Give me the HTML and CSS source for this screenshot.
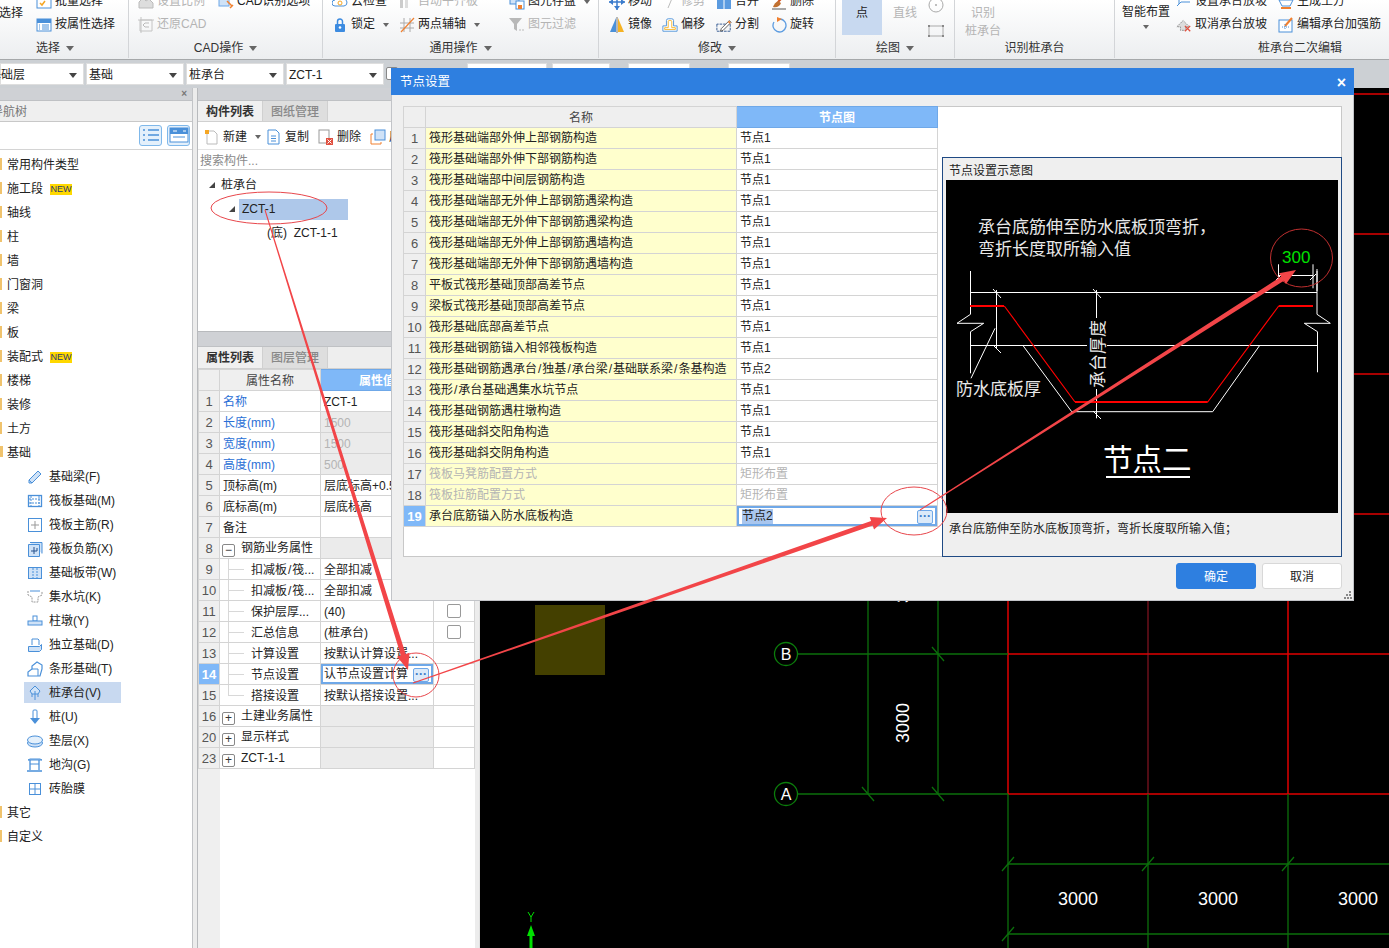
FILE: index.html
```html
<!DOCTYPE html>
<html lang="zh-CN">
<head>
<meta charset="utf-8">
<title>节点设置</title>
<link rel="stylesheet" href="styles.css">
</head>
<body>
<svg class="sprite" xmlns="http://www.w3.org/2000/svg">
  <symbol id="i-batch" viewBox="0 0 16 16"><rect x="1" y="2" width="14" height="12" fill="#fff" stroke="#4a90d9"/><path d="M4 9l2 2 3-4" fill="none" stroke="#f5a623" stroke-width="1.5"/></symbol>
  <symbol id="i-attr" viewBox="0 0 16 16"><rect x="1" y="2" width="14" height="12" fill="#fff" stroke="#4a90d9"/><rect x="1" y="2" width="14" height="4" fill="#4a90d9"/><path d="M3 8h1M3 10h1M3 12h1M6 8h7M6 10h7M6 12h7" stroke="#4a90d9"/></symbol>
  <symbol id="i-scale" viewBox="0 0 16 16"><path d="M1 14V8l4-4 3 3 3-2 4 4v5z" fill="#ddd" stroke="#bbb"/></symbol>
  <symbol id="i-cad" viewBox="0 0 16 16"><rect x="1" y="2" width="10" height="10" fill="#cfe2f7" stroke="#6fa8e8"/><path d="M9 7l5 5M12 14l3-3" stroke="#f08030" stroke-width="1.5"/></symbol>
  <symbol id="i-restore" viewBox="0 0 16 16"><path d="M2 3v11h12V3H2M0 3h16M3 0v16" fill="none" stroke="#c4c4c4"/><path d="M11 6H7L5 8l2 2h4" fill="none" stroke="#bbb"/></symbol>
  <symbol id="i-cloud" viewBox="0 0 16 16"><path d="M3 12a3 3 0 010-6 4 4 0 018-1 3.500 3.500 0 011 7z" fill="#fff" stroke="#4a90d9"/><circle cx="8" cy="9" r="2" fill="none" stroke="#f5a623"/></symbol>
  <symbol id="i-lock" viewBox="0 0 16 16"><path d="M5.500 7V4.500a2.500 2.500 0 015 0V7" fill="none" stroke="#3c8be0" stroke-width="1.500"/><rect x="3" y="7" width="10" height="8" rx="1" fill="#3c8be0"/><circle cx="8" cy="10.500" r="1.300" fill="#fff"/></symbol>
  <symbol id="i-align" viewBox="0 0 16 16"><rect x="1" y="2" width="3" height="12" fill="#ccc"/><rect x="6" y="5" width="3" height="9" fill="#ddd"/></symbol>
  <symbol id="i-axis" viewBox="0 0 16 16"><path d="M1 6h14M1 11h14M5 1v14M11 1v14" stroke="#aaa"/><path d="M2 15L15 1" stroke="#f08030" stroke-width="1.200"/></symbol>
  <symbol id="i-save" viewBox="0 0 16 16"><rect x="1" y="1" width="9" height="9" fill="#cfe2f7" stroke="#4a90d9"/><rect x="7" y="7" width="8" height="8" fill="#fff" stroke="#4a90d9"/><rect x="9" y="11" width="4" height="4" fill="#f08030"/></symbol>
  <symbol id="i-filter" viewBox="0 0 16 16"><path d="M0 1h13L8 7v7L5 12V7z" fill="#b8b8b8"/><path d="M10 13h2M13 13h2" stroke="#bbb"/></symbol>
  <symbol id="i-move" viewBox="0 0 16 16"><path d="M8 0v16M0 8h16" stroke="#3c7ccc" stroke-width="1.500"/><path d="M8 16l-3-4h6zM0 8l4-3v6zM16 8l-4-3v6z" fill="#3c7ccc"/></symbol>
  <symbol id="i-trim" viewBox="0 0 16 16"><path d="M6 14l5-12" stroke="#bbb"/></symbol>
  <symbol id="i-merge" viewBox="0 0 16 16"><rect x="1" y="4" width="14" height="11" fill="#5b9be0"/><path d="M8 4v11" stroke="#fff"/></symbol>
  <symbol id="i-del" viewBox="0 0 16 16"><path d="M14 1L7 8" stroke="#d05020" stroke-width="2"/><path d="M2 13c1-3 3-5 5-6l3 2c-1 3-4 5-8 4z" fill="#c07030"/><path d="M1 15h14" stroke="#555"/></symbol>
  <symbol id="i-mirror" viewBox="0 0 16 16"><path d="M7 1v14H1z" fill="#4a90d9"/><path d="M9 1v14h6z" fill="#f5b223"/><path d="M8 0v16" stroke="#777"/></symbol>
  <symbol id="i-offset" viewBox="0 0 18 16"><path d="M1 15V9h4V3a2 2 0 012-2h4a2 2 0 012 2v6h4v6z" fill="#fff" stroke="#4a90d9"/><path d="M3 13V11h4V4a1 1 0 011-1h2a1 1 0 011 1v7h4v2z" fill="none" stroke="#f5b223"/></symbol>
  <symbol id="i-split" viewBox="0 0 18 16"><path d="M1 7v8h15V7z" fill="none" stroke="#27508c" stroke-dasharray="3 1"/><path d="M6 12L15 3l2 2-9 9-3 1z" fill="#fff" stroke="#555"/><path d="M14 4l2 2" stroke="#f08030" stroke-width="2"/></symbol>
  <symbol id="i-rotate" viewBox="0 0 16 16"><path d="M9 2a6.500 6.500 0 11-6 3" fill="none" stroke="#5b9be0" stroke-width="1.300"/><path d="M6 0l5 2-5 3z" fill="#f08030"/></symbol>
  <symbol id="i-circle" viewBox="0 0 16 16"><circle cx="8" cy="8" r="7" fill="none" stroke="#aaa"/><circle cx="8" cy="8" r="1" fill="#aaa"/></symbol>
  <symbol id="i-rect" viewBox="0 0 16 12"><rect x="1" y="1" width="14" height="10" fill="none" stroke="#aaa"/><path d="M0 0h2v2H0zM14 0h2v2h-2zM0 10h2v2H0zM14 10h2v2h-2z" fill="#888"/></symbol>
  <symbol id="i-slope" viewBox="0 0 16 16"><path d="M1 12l4-4h9" fill="none" stroke="#4a90d9"/><path d="M3 2v8" stroke="#4a90d9"/></symbol>
  <symbol id="i-cancel" viewBox="0 0 18 16"><path d="M1 10l7-7 7 7H11v4H5v-4z" fill="#ddd" stroke="#888" stroke-dasharray="2 1"/><path d="M10 9l6 6M16 9l-6 6" stroke="#e05040" stroke-width="1.500"/></symbol>
  <symbol id="i-earth" viewBox="0 0 16 16"><path d="M1 6h14l-3 6H4z" fill="#fff" stroke="#4a90d9"/><path d="M3 14h10" stroke="#f08030" stroke-width="2"/></symbol>
  <symbol id="i-strong" viewBox="0 0 16 16"><rect x="1" y="3" width="13" height="12" fill="#fff" stroke="#4a90d9"/><path d="M7 9l7-8" stroke="#f08030" stroke-width="2"/><path d="M4 10h7M7 7v6" stroke="#4a90d9" stroke-dasharray="1 1"/></symbol>
  <symbol id="i-list" viewBox="0 0 20 16"><path d="M2 3h2M2 8h2M2 13h2M7 3h11M7 8h11M7 13h11" stroke="#4a90d9" stroke-width="1.500"/></symbol>
  <symbol id="i-win" viewBox="0 0 20 16"><rect x="1" y="1" width="18" height="14" fill="#fff" stroke="#4a90d9"/><rect x="1" y="1" width="18" height="6" fill="#4a90d9"/><path d="M4 4h4M14 4h3" stroke="#fff"/><path d="M4 10h12" stroke="#4a90d9"/></symbol>
  <symbol id="i-new" viewBox="0 0 16 16"><path d="M3 2h7l3 3v10H3z" fill="#fff" stroke="#bbb"/><path d="M1 1h4v4H1z" fill="#f5a623"/></symbol>
  <symbol id="i-copy" viewBox="0 0 16 16"><path d="M2 1h8l3 3v11H2z" fill="#fff" stroke="#4a90d9"/><path d="M5 7h5M5 9.500h5M5 12h5" stroke="#4a90d9"/></symbol>
  <symbol id="i-remove" viewBox="0 0 16 16"><rect x="1" y="1" width="10" height="13" fill="#fff" stroke="#999"/><rect x="8" y="9" width="7" height="7" fill="#e05040"/><path d="M9.500 10.500l4 4M13.500 10.500l-4 4" stroke="#fff"/></symbol>
  <symbol id="i-layer" viewBox="0 0 16 16"><rect x="5" y="1" width="10" height="10" fill="#cfe2f7" stroke="#4a90d9"/><path d="M3 5H1v10h10v-2" fill="none" stroke="#f08030"/></symbol>
  <symbol id="n-beam" viewBox="0 0 16 16"><path d="M2 11L11 2l3 3-9 9H2z" fill="#cfe2f7" stroke="#4a90d9"/><path d="M2 11l3 3" stroke="#4a90d9"/></symbol>
  <symbol id="n-raft" viewBox="0 0 16 16"><rect x="1.500" y="2.500" width="13" height="11" fill="#fff" stroke="#4a90d9" stroke-width="1.300"/><path d="M4 3v10M12 3v10M2 6h12M2 10h12" stroke="#4a90d9" stroke-dasharray="2 1"/></symbol>
  <symbol id="n-main" viewBox="0 0 16 16"><rect x="1.500" y="1.500" width="13" height="13" fill="#fff" stroke="#4a90d9"/><path d="M8 4v8M4 8h8" stroke="#999"/></symbol>
  <symbol id="n-neg" viewBox="0 0 16 16"><path d="M1.500 3.500h11v12h-11zM3 1.500h12v11" fill="#cfe2f7" stroke="#4a90d9"/><path d="M7 6v7M4 10h6V7" fill="none" stroke="#27508c"/></symbol>
  <symbol id="n-strip" viewBox="0 0 16 16"><rect x="1.500" y="2.500" width="13" height="11" fill="#cfe2f7" stroke="#4a90d9"/><path d="M6 3v10M10 3v10" stroke="#4a90d9" stroke-dasharray="2 1"/></symbol>
  <symbol id="n-pit" viewBox="0 0 16 16"><path d="M1 2v4l4 2v5h6V8l4-2V2" fill="none" stroke="#999" stroke-dasharray="2 1"/><path d="M3 2h10" stroke="#4a90d9"/></symbol>
  <symbol id="n-pier" viewBox="0 0 16 16"><rect x="6" y="3" width="4" height="5" fill="#fff" stroke="#4a90d9"/><rect x="1" y="8" width="14" height="4" fill="#cfe2f7" stroke="#4a90d9"/></symbol>
  <symbol id="n-foot" viewBox="0 0 16 16"><path d="M5 8V2h6l1 1v5" fill="#fff" stroke="#4a90d9"/><path d="M1.500 9.500h11l2-2v5l-2 2h-11z" fill="#cfe2f7" stroke="#4a90d9"/></symbol>
  <symbol id="n-stripf" viewBox="0 0 16 16"><path d="M1 15v-4l4-3V5l5-4 5 3v4l-2 7z" fill="#fff" stroke="#4a90d9" stroke-width="1.200"/><path d="M5 8h6v7" fill="none" stroke="#4a90d9"/></symbol>
  <symbol id="n-cap" viewBox="0 0 16 16"><path d="M8 1l5 5-2 3H5L3 6z" fill="#cfe2f7" stroke="#4a90d9"/><path d="M8 6v9M5 9v3M11 9v3" stroke="#4a90d9"/></symbol>
  <symbol id="n-pile" viewBox="0 0 16 16"><rect x="6" y="1" width="4" height="9" rx="1" fill="#fff" stroke="#4a90d9"/><path d="M3 9h10l-5 6z" fill="#4a90d9"/></symbol>
  <symbol id="n-disc" viewBox="0 0 16 16"><ellipse cx="8" cy="10" rx="7.500" ry="4" fill="#cfe2f7" stroke="#4a90d9"/><ellipse cx="8" cy="7" rx="7.500" ry="4" fill="#e4f0fb" stroke="#4a90d9"/></symbol>
  <symbol id="n-ditch" viewBox="0 0 16 16"><path d="M1 3h14l-2-1H3z" fill="#cfe2f7" stroke="#4a90d9"/><path d="M3 3v10M12 3v10M0 14h15" stroke="#4a90d9" stroke-width="1.300" fill="none"/><path d="M3 7h9" stroke="#4a90d9"/></symbol>
  <symbol id="n-brick" viewBox="0 0 16 16"><rect x="2.500" y="2.500" width="11" height="11" fill="#fff" stroke="#4a90d9"/><path d="M8 3v10M3 8h10" stroke="#4a90d9"/></symbol>
</svg>

<div class="app">
  <header class="ribbon">
    <section class="rgroup g1">
      <div class="rbody">
        <div class="rbig">选择</div>
        <div class="col">
          <div class="ritem"><svg class="ic"><use href="#i-batch"/></svg><span>批量选择</span></div>
          <div class="ritem"><svg class="ic"><use href="#i-attr"/></svg><span>按属性选择</span></div>
        </div>
      </div>
      <div class="rlabel">选择<i class="caret"></i></div>
    </section>
    <section class="rgroup g2">
      <div class="rbody">
        <div class="col w80">
          <div class="ritem off"><svg class="ic"><use href="#i-scale"/></svg><span>设置比例</span></div>
          <div class="ritem off"><svg class="ic"><use href="#i-restore"/></svg><span>还原CAD</span></div>
        </div>
        <div class="col">
          <div class="ritem"><svg class="ic"><use href="#i-cad"/></svg><span>CAD识别选项</span></div>
        </div>
      </div>
      <div class="rlabel">CAD操作<i class="caret"></i></div>
    </section>
    <section class="rgroup g3">
      <div class="rbody">
        <div class="col w67">
          <div class="ritem"><svg class="ic"><use href="#i-cloud"/></svg><span>云检查</span></div>
          <div class="ritem"><svg class="ic"><use href="#i-lock"/></svg><span>锁定</span><i class="caret sm"></i></div>
        </div>
        <div class="col w110">
          <div class="ritem off"><svg class="ic"><use href="#i-align"/></svg><span>自动平齐板</span></div>
          <div class="ritem"><svg class="ic"><use href="#i-axis"/></svg><span>两点辅轴</span><i class="caret sm"></i></div>
        </div>
        <div class="col">
          <div class="ritem"><svg class="ic"><use href="#i-save"/></svg><span>图元存盘</span><i class="caret sm"></i></div>
          <div class="ritem off"><svg class="ic"><use href="#i-filter"/></svg><span>图元过滤</span></div>
        </div>
      </div>
      <div class="rlabel">通用操作<i class="caret"></i></div>
    </section>
    <section class="rgroup g4">
      <div class="rbody">
        <div class="col w53">
          <div class="ritem"><svg class="ic"><use href="#i-move"/></svg><span>移动</span></div>
          <div class="ritem"><svg class="ic"><use href="#i-mirror"/></svg><span>镜像</span></div>
        </div>
        <div class="col w54">
          <div class="ritem off"><svg class="ic"><use href="#i-trim"/></svg><span>修剪</span></div>
          <div class="ritem"><svg class="ic"><use href="#i-offset"/></svg><span>偏移</span></div>
        </div>
        <div class="col w55">
          <div class="ritem"><svg class="ic"><use href="#i-merge"/></svg><span>合并</span></div>
          <div class="ritem"><svg class="ic"><use href="#i-split"/></svg><span>分割</span></div>
        </div>
        <div class="col">
          <div class="ritem"><svg class="ic"><use href="#i-del"/></svg><span>删除</span></div>
          <div class="ritem"><svg class="ic"><use href="#i-rotate"/></svg><span>旋转</span></div>
        </div>
      </div>
      <div class="rlabel">修改<i class="caret"></i></div>
    </section>
    <section class="rgroup g5">
      <div class="rbody">
        <div class="draw-on">点</div>
        <div class="draw-off">直线</div>
        <div class="draw-icons">
          <svg class="ic"><use href="#i-circle"/></svg>
          <svg class="ic"><use href="#i-rect"/></svg>
        </div>
      </div>
      <div class="rlabel">绘图<i class="caret"></i></div>
    </section>
    <section class="rgroup g6">
      <div class="rbody">
        <div class="rstack off"><span>识别</span><span>桩承台</span></div>
      </div>
      <div class="rlabel">识别桩承台</div>
    </section>
    <section class="rgroup g7">
      <div class="rbody">
        <div class="rsmart"><span>智能布置</span><i class="caret sm"></i></div>
        <div class="col w102">
          <div class="ritem"><svg class="ic"><use href="#i-slope"/></svg><span>设置承台放坡</span></div>
          <div class="ritem"><svg class="ic"><use href="#i-cancel"/></svg><span>取消承台放坡</span></div>
        </div>
        <div class="col">
          <div class="ritem"><svg class="ic"><use href="#i-earth"/></svg><span>生成土方</span></div>
          <div class="ritem"><svg class="ic"><use href="#i-strong"/></svg><span>编辑承台加强筋</span></div>
        </div>
      </div>
      <div class="rlabel">桩承台二次编辑</div>
    </section>
  </header>

  <div class="combos">
    <div class="combo cb1"><span class="clip">基础层</span><i class="caret dark"></i></div>
    <div class="combo cb2"><span>基础</span><i class="caret dark"></i></div>
    <div class="combo cb2"><span>桩承台</span><i class="caret dark"></i></div>
    <div class="combo cb2"><span>ZCT-1</span><i class="caret dark"></i></div>
    <div class="combo-check"></div>
    <div class="combo cb3"></div>
    <div class="combo cb4"></div>
    <div class="combo cb5"></div>
    <div class="combo cb6"></div>
  </div>

  <main class="work">
    <nav class="nav">
      <div class="strip"><span class="strip-x">×</span></div>
      <div class="nav-head"><span>模块导航树</span></div>
      <div class="nav-tools">
        <div class="nav-btn"><svg class="ic wide"><use href="#i-list"/></svg></div>
        <div class="nav-btn"><svg class="ic wide"><use href="#i-win"/></svg></div>
      </div>
      <div class="nav-list">
        <div class="nav-row">常用构件类型</div>
        <div class="nav-row">施工段<b class="new">NEW</b></div>
        <div class="nav-row">轴线</div>
        <div class="nav-row">柱</div>
        <div class="nav-row">墙</div>
        <div class="nav-row">门窗洞</div>
        <div class="nav-row">梁</div>
        <div class="nav-row">板</div>
        <div class="nav-row">装配式<b class="new">NEW</b></div>
        <div class="nav-row">楼梯</div>
        <div class="nav-row">装修</div>
        <div class="nav-row">土方</div>
        <div class="nav-row open">基础</div>
        <div class="nav-child"><svg class="ic"><use href="#n-beam"/></svg>基础梁(F)</div>
        <div class="nav-child"><svg class="ic"><use href="#n-raft"/></svg>筏板基础(M)</div>
        <div class="nav-child"><svg class="ic"><use href="#n-main"/></svg>筏板主筋(R)</div>
        <div class="nav-child"><svg class="ic"><use href="#n-neg"/></svg>筏板负筋(X)</div>
        <div class="nav-child"><svg class="ic"><use href="#n-strip"/></svg>基础板带(W)</div>
        <div class="nav-child"><svg class="ic"><use href="#n-pit"/></svg>集水坑(K)</div>
        <div class="nav-child"><svg class="ic"><use href="#n-pier"/></svg>柱墩(Y)</div>
        <div class="nav-child"><svg class="ic"><use href="#n-foot"/></svg>独立基础(D)</div>
        <div class="nav-child"><svg class="ic"><use href="#n-stripf"/></svg>条形基础(T)</div>
        <div class="nav-child sel"><svg class="ic"><use href="#n-cap"/></svg>桩承台(V)</div>
        <div class="nav-child"><svg class="ic"><use href="#n-pile"/></svg>桩(U)</div>
        <div class="nav-child"><svg class="ic"><use href="#n-disc"/></svg>垫层(X)</div>
        <div class="nav-child"><svg class="ic"><use href="#n-ditch"/></svg>地沟(G)</div>
        <div class="nav-child"><svg class="ic"><use href="#n-brick"/></svg>砖胎膜</div>
        <div class="nav-row">其它</div>
        <div class="nav-row">自定义</div>
      </div>
    </nav>

    <section class="mid">
      <div class="strip"></div>
      <div class="tabs">
        <div class="tab on">构件列表</div>
        <div class="tab">图纸管理</div>
      </div>
      <div class="mid-tools">
        <svg class="ic"><use href="#i-new"/></svg><span>新建</span><i class="caret sm"></i>
        <svg class="ic t2"><use href="#i-copy"/></svg><span>复制</span>
        <svg class="ic t3"><use href="#i-remove"/></svg><span>删除</span>
        <svg class="ic t3"><use href="#i-layer"/></svg><span>层间复制</span>
      </div>
      <div class="search">搜索构件...</div>
      <div class="tree">
        <div class="tree-row"><i class="tri"></i>桩承台</div>
        <div class="tree-row lvl2"><i class="tri"></i><span class="tree-sel">ZCT-1</span></div>
        <div class="tree-row lvl3">(底)&nbsp;&nbsp;ZCT-1-1</div>
      </div>
      <div class="strip strip2"></div>
      <div class="tabs tabs2">
        <div class="tab on">属性列表</div>
        <div class="tab">图层管理</div>
      </div>
      <div class="prop-body">
        <table class="grid props">
          <colgroup><col class="pc1"><col class="pc2"><col class="pc3"><col class="pc4"></colgroup>
          <thead><tr><th></th><th>属性名称</th><th class="hot">属性值</th><th></th></tr></thead>
          <tbody>
            <tr><td class="num">1</td><td class="key">名称</td><td>ZCT-1</td><td></td></tr>
            <tr><td class="num">2</td><td class="key">长度(mm)</td><td class="ro">1500</td><td></td></tr>
            <tr><td class="num">3</td><td class="key">宽度(mm)</td><td class="ro">1500</td><td></td></tr>
            <tr><td class="num">4</td><td class="key">高度(mm)</td><td class="ro">500</td><td></td></tr>
            <tr><td class="num">5</td><td>顶标高(m)</td><td>层底标高+0.5</td><td></td></tr>
            <tr><td class="num">6</td><td>底标高(m)</td><td>层底标高</td><td></td></tr>
            <tr><td class="num">7</td><td>备注</td><td></td><td></td></tr>
            <tr><td class="num">8</td><td><i class="box">−</i>钢筋业务属性</td><td class="fill"></td><td></td></tr>
            <tr><td class="num">9</td><td class="twig">扣减板<span class="sl">/</span>筏...</td><td>全部扣减</td><td></td></tr>
            <tr><td class="num">10</td><td class="twig">扣减板<span class="sl">/</span>筏...</td><td>全部扣减</td><td></td></tr>
            <tr><td class="num">11</td><td class="twig">保护层厚...</td><td>(40)</td><td class="chk"><i class="check"></i></td></tr>
            <tr><td class="num">12</td><td class="twig">汇总信息</td><td>(桩承台)</td><td class="chk"><i class="check"></i></td></tr>
            <tr><td class="num">13</td><td class="twig">计算设置</td><td>按默认计算设置...</td><td></td></tr>
            <tr><td class="num act">14</td><td class="twig">节点设置</td><td class="edit"><div class="editbox"><span>认节点设置计算</span><i class="dots">···</i></div></td><td></td></tr>
            <tr><td class="num">15</td><td class="twig last">搭接设置</td><td>按默认搭接设置...</td><td></td></tr>
            <tr><td class="num">16</td><td><i class="box">+</i>土建业务属性</td><td class="fill"></td><td></td></tr>
            <tr><td class="num">20</td><td><i class="box">+</i>显示样式</td><td class="fill"></td><td></td></tr>
            <tr><td class="num">23</td><td><i class="box">+</i>ZCT-1-1</td><td class="fill"></td><td></td></tr>
          </tbody>
        </table>
      </div>
    </section>

    <div class="split"></div>

    <section class="canvas">
      <svg class="cad" viewBox="480 88 909 860" xmlns="http://www.w3.org/2000/svg">
        <rect x="535" y="605" width="70" height="70" fill="#444000"/>
        <g stroke="#e00000" stroke-width="1.500" fill="none">
          <path d="M1008 94H1389M1008 234H1389M1008 374H1389M1008 514H1389M1008 654H1389M1008 794H1389"/>
          <path d="M1008 88V794M1288 88V794"/>
        </g>
        <path d="M1148 88V794" stroke="#a01828" fill="none"/>
        <g stroke="#0b6f0b" stroke-width="1.300" fill="none">
          <path d="M798 654H1008M798 794H1008"/>
          <path d="M868 88V794M938 88V794"/>
          <path d="M1008 794V948M1148 794V948M1288 794V948"/>
          <path d="M1008 864H1389M1008 934H1389"/>
          <path d="M862 787l12 14M932 787l12 14M932 647l12 14"/>
          <path d="M1002 871l12-14M1142 871l12-14M1282 871l12-14M1002 941l12-14"/>
        </g>
        <g fill="none" stroke="#0b7d0b" stroke-width="1.300">
          <circle cx="786" cy="654" r="11.500"/>
          <circle cx="786" cy="794" r="11.500"/>
        </g>
        <text class="cadtxt ab" x="786" y="660">B</text>
        <text class="cadtxt ab" x="786" y="800">A</text>
        <text class="cadtxt" transform="translate(909 743) rotate(-90)">3000</text>
        <text class="cadtxt" transform="translate(909 603) rotate(-90)">3000</text>
        <text class="cadtxt" x="1058" y="905">3000</text>
        <text class="cadtxt" x="1198" y="905">3000</text>
        <text class="cadtxt" x="1338" y="905">3000</text>
        <path d="M531 933V948" stroke="#00e000" stroke-width="3"/>
        <path d="M531 925l-4 11h8z" fill="#00e000"/>
        <path d="M528 912l3 5 3-5M531 917v5" stroke="#00e000" fill="none"/>
      </svg>
    </section>
  </main>

  <section class="dialog">
    <div class="dlg-title"><span>节点设置</span><span class="dlg-x">×</span></div>
    <div class="dlg-body">
      <table class="grid nodes">
        <colgroup><col class="nc1"><col class="nc2"><col class="nc3"></colgroup>
        <thead><tr><th></th><th>名称</th><th class="hot">节点图</th></tr></thead>
        <tbody>
          <tr><td class="num">1</td><td class="yel">筏形基础端部外伸上部钢筋构造</td><td>节点1</td></tr>
          <tr><td class="num">2</td><td class="yel">筏形基础端部外伸下部钢筋构造</td><td>节点1</td></tr>
          <tr><td class="num">3</td><td class="yel">筏形基础端部中间层钢筋构造</td><td>节点1</td></tr>
          <tr><td class="num">4</td><td class="yel">筏形基础端部无外伸上部钢筋遇梁构造</td><td>节点1</td></tr>
          <tr><td class="num">5</td><td class="yel">筏形基础端部无外伸下部钢筋遇梁构造</td><td>节点1</td></tr>
          <tr><td class="num">6</td><td class="yel">筏形基础端部无外伸上部钢筋遇墙构造</td><td>节点1</td></tr>
          <tr><td class="num">7</td><td class="yel">筏形基础端部无外伸下部钢筋遇墙构造</td><td>节点1</td></tr>
          <tr><td class="num">8</td><td class="yel">平板式筏形基础顶部高差节点</td><td>节点1</td></tr>
          <tr><td class="num">9</td><td class="yel">梁板式筏形基础顶部高差节点</td><td>节点1</td></tr>
          <tr><td class="num">10</td><td class="yel">筏形基础底部高差节点</td><td>节点1</td></tr>
          <tr><td class="num">11</td><td class="yel">筏形基础钢筋锚入相邻筏板构造</td><td>节点1</td></tr>
          <tr><td class="num">12</td><td class="yel">筏形基础钢筋遇承台<span class="sl">/</span>独基<span class="sl">/</span>承台梁<span class="sl">/</span>基础联系梁<span class="sl">/</span>条基构造</td><td>节点2</td></tr>
          <tr><td class="num">13</td><td class="yel">筏形<span class="sl">/</span>承台基础遇集水坑节点</td><td>节点1</td></tr>
          <tr><td class="num">14</td><td class="yel">筏形基础钢筋遇柱墩构造</td><td>节点1</td></tr>
          <tr><td class="num">15</td><td class="yel">筏形基础斜交阳角构造</td><td>节点1</td></tr>
          <tr><td class="num">16</td><td class="yel">筏形基础斜交阴角构造</td><td>节点1</td></tr>
          <tr class="dim"><td class="num">17</td><td class="yel">筏板马凳筋配置方式</td><td>矩形布置</td></tr>
          <tr class="dim"><td class="num">18</td><td class="yel">筏板拉筋配置方式</td><td>矩形布置</td></tr>
          <tr><td class="num act">19</td><td class="yel">承台底筋锚入防水底板构造</td><td class="edit"><div class="editbox"><span class="picked">节点2</span><i class="dots">···</i></div></td></tr>
        </tbody>
      </table>
      <div class="preview">
        <div class="pv-title">节点设置示意图</div>
        <svg class="pv-img" viewBox="945 180 392 333" xmlns="http://www.w3.org/2000/svg">
          <rect x="945" y="180" width="392" height="333" fill="#000"/>
          <g stroke="#fff" fill="none">
            <path d="M969.500 271V314.300L956 323.300H982.700L969.500 331.700V373.300"/>
            <path d="M1316 271V314.300L1329.300 323.300H1303.300L1316.500 331.700V372.300"/>
            <path d="M969.500 292.500H1316M969.500 345.500H1316.500"/>
            <path d="M995.500 290V348.300M992 289l8 9M992 345l8 8"/>
            <path d="M1095.500 290V418.300M1092 289l8 9M1092 411l8 8"/>
            <path d="M994 328.300L970 378.300"/>
            <path d="M1022.300 346L1070.700 411.700H1211.700L1258.300 346"/>
            <path d="M1277.500 264.300V280M1312 264.300V288.300M1277.500 275.500H1312M1275 280l6-6M1309 280l6-6M1316 269v22"/>
          </g>
          <g stroke="#ff0000" fill="none">
            <path d="M969 306H1003M1074 402H1206.700M1277.700 306H1312" stroke-width="2"/>
            <path d="M1003.300 306L1074 402M1206.700 402L1277.700 306" stroke-width="1.200"/>
          </g>
          <rect class="pv-gap" x="1086" y="318" width="20" height="71"/>
          <text class="pv-t" x="977" y="233">承台底筋伸至防水底板顶弯折，</text>
          <text class="pv-t" x="977" y="255">弯折长度取所输入值</text>
          <text class="pv-t" x="955" y="395">防水底板厚</text>
          <text class="pv-t" transform="translate(1103 388) rotate(-90)">承台厚度</text>
          <text class="pv-g" x="1281" y="263">300</text>
          <text class="pv-big" x="1102" y="470">节点二</text>
          <path d="M1105 477H1189" stroke="#fff" stroke-width="2"/>
        </svg>
        <div class="pv-desc">承台底筋伸至防水底板顶弯折，弯折长度取所输入值；</div>
      </div>
    </div>
    <div class="dlg-foot">
      <div class="btn primary">确定</div>
      <div class="btn">取消</div>
    </div>
    <svg class="grip" viewBox="0 0 8 8" xmlns="http://www.w3.org/2000/svg"><path d="M5 0h2v2H5zM2 3h2v2H2zM5 3h2v2H5zM0 6h2v2H0zM3 6h2v2H3zM6 6h2v2H6z" fill="#888"/></svg>
  </section>

  <svg class="annot" viewBox="0 0 1389 948" xmlns="http://www.w3.org/2000/svg">
    <g fill="none" stroke="#e8474c">
      <ellipse cx="269" cy="208" rx="58" ry="16"/>
      <ellipse cx="416" cy="675" rx="23" ry="22"/>
      <ellipse cx="914" cy="511" rx="33" ry="24"/>
      <ellipse cx="1301.500" cy="258" rx="31" ry="29" stroke="#c03030"/>
    </g>
    <g fill="#f24548">
      <polygon points="265.480,209.850 405.640,653.960 409.460,652.770 408,670 397.040,656.630 400.860,655.440 264.520,210.150"/>
      <polygon points="413.160,683.470 872.710,525.620 874.030,529.400 887,518 869.750,517.120 871.070,520.900 412.840,682.530"/>
      <polygon points="920.270,510.420 1283.860,280.720 1286,284.090 1296,270 1279.010,273.130 1281.170,276.500 919.730,509.580"/>
    </g>
  </svg>
</div>
</body>
</html>
```

FILE: styles.css
```css
* { box-sizing: border-box; }
html, body { margin: 0; padding: 0; background: #d4d6da; }
body { font: 12px/1.2 "Liberation Sans", "Noto Sans CJK SC", sans-serif; color: #222; }
i, b { font-style: normal; font-weight: normal; }
.sprite { display: none; }
.app { position: relative; width: 1389px; height: 948px; overflow: hidden; display: flex; flex-direction: column; }
.ic { width: 16px; height: 16px; flex: none; display: block; }
.ic.wide { width: 20px; }
.sl { padding: 0 1px; }

/* ribbon */
.ribbon { height: 60px; flex: none; display: flex; overflow: hidden; background: linear-gradient(#fff, #eceef0); border-bottom: 1px solid #a5a8aa; }
.rgroup { flex: none; height: 58px; display: flex; flex-direction: column; border-right: 1px solid #d3d5d8; }
.rbody { height: 47px; margin-top: -9px; display: flex; flex: none; }
.rlabel { height: 20px; flex: none; display: flex; align-items: center; justify-content: center; color: #333; line-height: 20px; }
.g1 { width: 147px; margin-left: -18px; }
.g1 .rbody { padding-left: 17px; }
.g2 { width: 194px; }
.g3 { width: 276px; }
.g4 { width: 237px; }
.g2 .rbody, .g3 .rbody { padding-left: 9px; }
.g4 .rbody { padding-left: 10px; }
.g5 { width: 119px; }
.g6 { width: 160px; }
.g7 { width: 370px; border-right: 0; }
.g7 .rbody { padding-left: 7px; }
.rbig { width: 24px; margin-right: 13px; align-self: center; margin-bottom: 3px; white-space: nowrap; }
.col { display: flex; flex-direction: column; gap: 2px; flex: none; }
.w53 { width: 53px; }
.w54 { width: 54px; }
.w55 { width: 55px; }
.w67 { width: 67px; }
.w80 { width: 80px; }
.w102 { width: 102px; }
.w110 { width: 110px; }
.ritem { height: 21px; display: flex; align-items: center; gap: 3px; white-space: nowrap; }
.ritem.off, .rstack.off, .draw-off, .ro, .dim td { color: #b4b4b4; }
.caret { display: inline-block; width: 0; height: 0; margin-left: 6px; border: 4px solid transparent; border-top: 5px solid #666; border-bottom: 0; }
.caret.sm { border-width: 3px; border-top-width: 4px; border-bottom: 0; margin-left: 5px; }
.caret.dark { margin-left: auto; border-top-color: #444; }
.draw-on { width: 40px; height: 35px; margin: 9px 0 0 6px; padding-top: 6px; text-align: center; background: #c8d9f0; }
.draw-off { width: 46px; height: 35px; margin-top: 9px; padding-top: 6px; text-align: center; }
.draw-icons { width: 20px; display: flex; flex-direction: column; gap: 10px; margin-top: 6px; }
.rstack { width: 36px; margin: 13px 0 0 10px; display: flex; flex-direction: column; align-items: center; line-height: 18px; white-space: nowrap; }
.rsmart { width: 54px; padding-top: 14px; display: flex; flex-direction: column; align-items: flex-start; gap: 6px; white-space: nowrap; }
.rsmart .caret { margin-left: 21px; }

/* combos */
.combos { height: 28px; flex: none; display: flex; padding-top: 3px; background: #ccd0d4; }
.combo { height: 22px; margin-right: 2px; padding: 2px 6px 0 2px; display: flex; align-items: center; background: #fff; border: 1px solid #dedede; }
.cb1 { width: 84px; }
.cb1 .clip { margin-left: -14px; }
.cb2 { width: 98px; }
.combo-check { width: 12px; height: 13px; margin: 4px 69px 0 0; background: #fff; border: 1px solid #888; border-radius: 2px; }
.cb3 { width: 80px; margin-right: 5px; }
.cb4 { width: 58px; margin-right: 18px; }
.cb5 { width: 62px; margin-right: 38px; }
.cb6 { width: 62px; }

/* main */
.work { flex: 1; min-height: 0; display: flex; background: #ececec; }
.strip { height: 13px; flex: none; background: #cfd1d5; border-bottom: 1px solid #bfc1c4; display: flex; justify-content: flex-end; align-items: center; }
.strip-x { margin-right: 5px; color: #777; font-size: 10px; line-height: 10px; font-weight: bold; }

/* nav */
.nav { width: 193px; flex: none; margin-right: 4px; background: #fff; border-right: 1px solid #c2c4c7; display: flex; flex-direction: column; overflow: hidden; }
.nav-head { height: 21px; flex: none; background: #efefef; border-bottom: 1px solid #c8c8c8; color: #777; line-height: 22px; white-space: nowrap; }
.nav-head span { margin-left: -33px; }
.nav-tools { height: 28px; flex: none; display: flex; justify-content: flex-end; align-items: center; gap: 5px; padding: 0 2px 1px 0; border-bottom: 1px solid #d4d4d4; }
.nav-btn { width: 23px; height: 21px; display: flex; align-items: center; justify-content: center; background: #e4f0fb; border: 1px solid #7fb8ea; border-radius: 3px; }
.nav-list { flex: 1; padding-top: 2px; display: flex; flex-direction: column; }
.nav-row { height: 24px; flex: none; padding: 2px 0 0 7px; display: flex; align-items: center; background: linear-gradient(#f0c36d, #f0c36d) 0 6px / 2px 12px no-repeat; }
.nav-row.open { background-size: 3px 11px; }
.nav-child { width: 97px; height: 21px; flex: none; margin: 1.5px 0 1.5px 24px; padding: 2px 0 0 3px; display: flex; align-items: center; gap: 6px; white-space: nowrap; }
.nav-child.sel { background: #c8d9f0; }
.new { margin-left: 7px; width: 22px; height: 11px; background: #ffd800; color: #2a3a70; font-size: 9px; line-height: 11px; text-align: center; }

/* middle */
.mid { width: 278px; flex: none; background: #fff; border-left: 1px solid #b8babd; display: flex; flex-direction: column; overflow: hidden; }
.tabs { height: 21px; flex: none; display: flex; padding-right: 0; background: #eee; border-bottom: 1px solid #d0d0d0; }
.tabs2 { height: 22px; }
.tab { width: 65px; text-align: center; line-height: 22px; background: #dedede; color: #888; font-weight: 500; border-right: 1px solid #d0d0d0; }
.tab.on { background: #f0f0f0; color: #333; font-weight: 700; }
.mid-tools { height: 28px; flex: none; display: flex; align-items: center; padding: 3px 0 0 6px; gap: 3px; background: #fff; white-space: nowrap; border-bottom: 1px solid #e4e4e4; }
.mid-tools .t2 { margin-left: 2px; }
.mid-tools .t3 { margin-left: 6px; }
.search { height: 20px; flex: none; padding-left: 2px; line-height: 23px; color: #8a8a8a; background: #fff; border-bottom: 1px solid #cfcfcf; overflow: hidden; }
.tree { height: 161px; flex: none; padding-top: 2px; background: #fff; }
.tree-row { height: 24px; padding: 2px 0 0 11px; display: flex; align-items: center; }
.tree-row.lvl2 { padding-left: 31px; }
.tree-row.lvl3 { padding-left: 69px; }
.tri { width: 0; height: 0; margin-right: 6px; border-style: solid; border-width: 0 0 6px 6px; border-color: transparent transparent #444 transparent; }
.lvl2 .tri { margin-right: 4px; }
.tree-sel { width: 109px; height: 21px; line-height: 21px; padding-left: 3px; background: #aec8ea; }
.strip2 { height: 16px; border-top: 1px solid #b8babd; }
.prop-body { flex: 1; min-height: 0; background: linear-gradient(90deg, #efefef 22px, #fff 22px); }

/* grids */
.grid { border-collapse: collapse; table-layout: fixed; }
.grid th, .grid td { height: 21px; padding: 1px 3px 0; border: 1px solid #d4d4d4; overflow: hidden; white-space: nowrap; font-weight: normal; }
.grid th { padding-top: 2px; background: #efefef; color: #444; text-align: center; }
.grid th.hot { background: #7fb8f8; color: #fff; font-weight: 700; border-color: #6fa8e8; }
.grid td.num { padding: 1px 0 0; background: #efefef; color: #555; font-size: 13px; text-align: center; }
.grid td.num.act { background: #7fb8f8; color: #fff; font-weight: 700; }
.props { width: 276px; }
.props td { padding-top: 2px; }
.grid.props td.num { padding-top: 2px; }
.pc1 { width: 21px; }
.pc2 { width: 101px; }
.pc3 { width: 113px; }
.pc4 { width: 41px; }
.key { color: #2a6fd6; }
.ro, .fill { background: #ebebeb; }
.box { display: inline-block; width: 13px; height: 13px; margin: 0 6px 0 -1px; border: 1px solid #888; border-radius: 2px; text-align: center; line-height: 10px; vertical-align: -2px; color: #333; }
.grid td.twig { padding-left: 31px; background: linear-gradient(#d8d8d8, #d8d8d8) 8px 0 / 1px 100% no-repeat, linear-gradient(#d8d8d8, #d8d8d8) 8px 50% / 16px 1px no-repeat; }
.grid td.twig.last { background: linear-gradient(#d8d8d8, #d8d8d8) 8px 0 / 1px 50% no-repeat, linear-gradient(#d8d8d8, #d8d8d8) 8px 50% / 16px 1px no-repeat; }
.chk { text-align: center; }
.grid td.chk { padding-top: 0; }
.check { display: block; width: 14px; height: 14px; margin: 0 auto; background: #fff; border: 1px solid #999; border-radius: 2px; }
.grid td.edit { padding: 0; box-shadow: inset 0 0 0 2px #6fa8e8; }
.editbox { height: 19px; padding: 1px 4px 0 3px; display: flex; align-items: center; justify-content: space-between; }
.dots { width: 16px; height: 14px; background: #dceaf9; border: 1px solid #6fa8e8; border-radius: 2px; color: #3a7cc8; font-size: 12px; font-weight: 700; line-height: 11px; text-align: center; }
.picked { margin-left: 2px; background: #a9c6ee; }

/* dialog */
.dialog { position: absolute; left: 391px; top: 68px; width: 963px; height: 533px; z-index: 2; background: #efefef; border: 1px solid #c2c4c8; display: flex; flex-direction: column; }
.dlg-title { height: 27px; flex: none; margin: -1px -1px 0; padding: 2px 8px 0 9px; display: flex; align-items: center; justify-content: space-between; background: #2e7fe0; color: #fff; font-size: 12.500px; }
.dlg-x { font-size: 16px; line-height: 16px; font-weight: bold; }
.dlg-body { width: 939px; height: 451px; flex: none; margin: 11px 11px 0; display: flex; background: #fff; border: 1px solid #c8c8c8; }
.nodes { width: 534px; height: 419px; flex: none; align-self: flex-start; margin: -1px 0 0 -1px; }
.nc1 { width: 22px; }
.nc2 { width: 311px; }
.nc3 { width: 201px; }
.yel { background: #ffffcd; }
.preview { width: 400px; height: 400px; margin: 50px 0 0 4px; padding: 0 3px; flex: none; display: flex; flex-direction: column; background: #efefef; border: 1px solid #1f4a84; }
.pv-title { height: 22px; flex: none; padding: 6px 0 0 3px; color: #222; }
.pv-img { width: 392px; height: 333px; flex: none; display: block; }
.pv-gap { fill: #000; }
.pv-t { fill: #e8e8e8; font-size: 17px; }
.pv-g { fill: #00e000; font-size: 17px; }
.pv-big { fill: #fff; font-size: 29.500px; }
.pv-desc { padding: 9px 0 0 3px; }
.dlg-foot { height: 42px; flex: none; padding: 6px 11px 0 0; display: flex; justify-content: flex-end; gap: 6px; }
.btn { width: 80px; height: 26px; line-height: 27px; text-align: center; background: #fff; border: 1px solid #d8d8d8; border-radius: 3px; }
.btn.primary { background: #2e7fe0; border-color: #2e7fe0; color: #fff; }
.grip { position: absolute; right: 1px; bottom: 1px; width: 8px; height: 8px; }

/* CAD */
.split { width: 5px; flex: none; background: #ececec; border-right: 1px solid #e0e0e0; }
.canvas { flex: 1; background: #000; min-width: 0; }
.cad { width: 909px; height: 860px; display: block; }
.cadtxt { fill: #fff; font: 18px "Liberation Sans", sans-serif; }
.cadtxt.ab { text-anchor: middle; font-size: 16px; }

.annot { position: absolute; left: 0; top: 0; width: 1389px; height: 948px; z-index: 3; pointer-events: none; }
```
